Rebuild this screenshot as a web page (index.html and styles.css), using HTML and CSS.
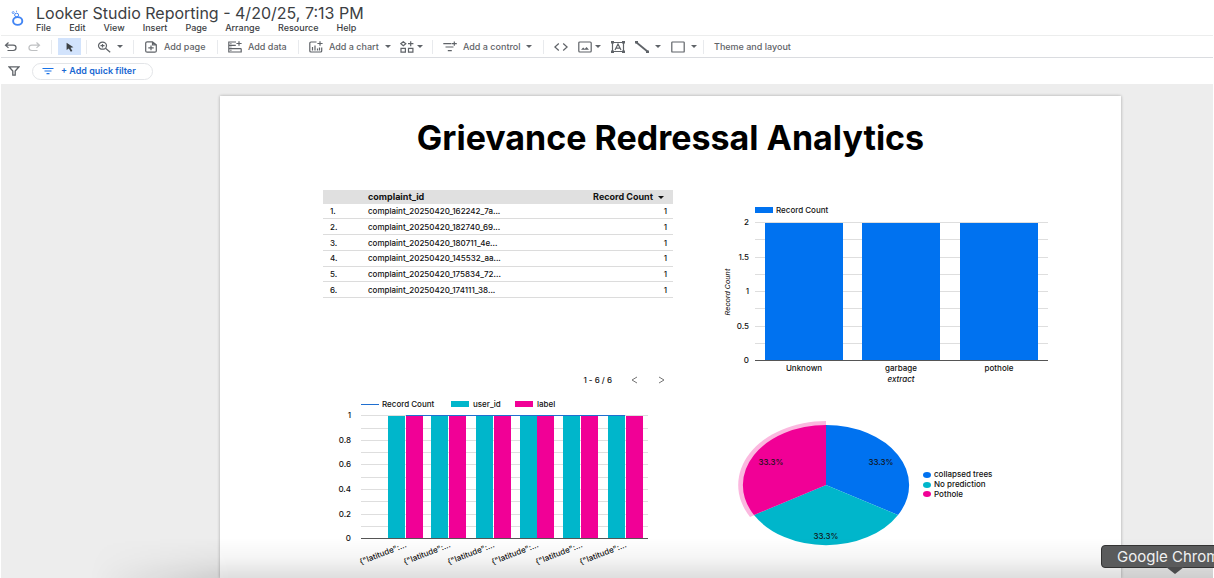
FILE: index.html
```html
<!DOCTYPE html>
<html lang="en">
<head>
<meta charset="utf-8">
<meta name="viewport" content="width=device-width, initial-scale=1">
<title>Looker Studio Reporting</title>
<link rel="stylesheet" href="styles.css">
</head>
<body>
<header class="header">
  <svg class="logo" viewBox="0 0 14 17" fill="none" stroke="#4285f4" aria-hidden="true">
    <ellipse cx="7.7" cy="11" rx="4.6" ry="3.9" stroke-width="1.9"/>
    <ellipse cx="6.6" cy="5" rx="2" ry="1.8" stroke-width="1"/>
    <circle cx="3.2" cy="2.6" r="1" stroke-width=".8"/>
    <path d="M6 1.6 7 .9M7.6 6.8l.6.8" stroke-width="1"/>
  </svg>
  <div class="heading">
    <h1 class="doc-title">Looker Studio Reporting - 4/20/25, 7:13 PM</h1>
    <nav class="menu">
      <button>File</button><button>Edit</button><button>View</button><button>Insert</button><button>Page</button><button>Arrange</button><button>Resource</button><button>Help</button>
    </nav>
  </div>
</header>

<div class="toolbar" role="toolbar" aria-label="Editing tools">
  <div class="group history">
    <button aria-label="Undo"><svg class="icon" viewBox="0 0 14 12"><path d="M4.5 1.5 1.5 4.2l3 2.7M1.8 4.2h7.4c3.8 0 3.8 5.3 0 5.3H3.5"/></svg></button>
    <button aria-label="Redo" class="disabled"><svg class="icon" viewBox="0 0 14 12"><path d="m9.5 1.5 3 2.7-3 2.7M12.2 4.2H4.8C1 4.2 1 9.5 4.8 9.5h5.7"/></svg></button>
  </div>
  <div class="group select">
    <button class="active" aria-label="Select"><svg class="icon" viewBox="0 0 14 12"><path class="solid" d="M3.6 1.8v7.2l2.2-1.5 2 3.2 1.6-.8-1.9-3.1 2.9-.5z"/></svg></button>
  </div>
  <div class="group zoom">
    <button aria-label="Zoom"><svg class="icon" viewBox="0 0 14 12"><ellipse cx="5.5" cy="4.7" rx="4" ry="3.5"/><path d="M5.5 2.9v3.6M3.5 4.7h4M8.5 7.3l4.7 4"/></svg><span class="caret"></span></button>
  </div>
  <div class="group">
    <button><svg class="icon" viewBox="0 0 14 12"><path d="M8.5.9H3.2c-1 0-1.5.4-1.5 1.2v7.9c0 .8.5 1.2 1.5 1.2h7.6c1 0 1.500-.4 1.500-1.200V3.800zM8.500.9v2.900h3.800M7 4.600v4.600M4.300 6.900h5.400"/></svg>Add page</button>
  </div>
  <div class="group">
    <button><svg class="icon" viewBox="0 0 14 12"><path d="M8 1H.8v10h12.400V7.500M.8 4.300h7M.8 7.700h12.400M11 .2v4.600M8.400 2.500h5.200M2.400 2.600h1M2.400 6h1M2.400 9.300h1"/></svg>Add data</button>
  </div>
  <div class="group chart">
    <button><svg class="icon" viewBox="0 0 14 12"><path d="M7.500 1H2Q.8 1 .8 2v8q0 1 1.200 1h9.500q1.200 0 1.200-1V6.500M11 .2v4.600M8.400 2.500h5.200M3.500 6v3.500M6 4.500v5M8.500 7.500v2M10.500 6.500v3"/></svg>Add a chart<span class="caret"></span></button>
    <button aria-label="Community visualizations" class="tight"><svg class="icon" viewBox="0 0 14 12"><path d="M3.300.7 5.800 2.700 3.300 4.700.8 2.700zM10.700.2v5M8 2.700h5.400M1 7.300h4.400v3.900H1zM8.500 7.300h4.400v3.900H8.500z"/></svg><span class="caret"></span></button>
  </div>
  <div class="group">
    <button><svg class="icon" viewBox="0 0 14 12"><path d="M.3 2.600h8M2.500 6h8M4.800 9.600h4M11.300.4v4.400M8.800 2.600h5"/></svg>Add a control<span class="caret"></span></button>
  </div>
  <div class="group insert">
    <button aria-label="Embed URL"><svg class="icon" viewBox="0 0 14 12"><path d="M4.800 2.500.9 6l3.900 3.500M9.200 2.500 13.100 6 9.200 9.500"/></svg></button>
    <button aria-label="Image" class="tight"><svg class="icon" viewBox="0 0 14 12"><rect x=".8" y="1" width="12.400" height="10" rx="1"/><path class="solid" d="M3 8.800 5.200 6.400 6.800 7.900 8.500 5.900 11 8.800z"/></svg><span class="caret"></span></button>
    <button aria-label="Text"><svg class="icon" viewBox="0 0 14 12"><path d="M1.500 1.500h11v9h-11zM4 9l3-6 3 6M5 7.200h4"/><path class="solid" d="M0 0h3v2.500H0zM11 0h3v2.500h-3zM0 9.500h3V12H0zM11 9.500h3V12h-3z"/></svg></button>
    <button aria-label="Line"><svg class="icon" viewBox="0 0 14 12"><path d="m1.500 1.500 11 9" stroke-width="1.800"/><path class="solid" d="M0 0h3v2.500H0zM11 9.500h3V12h-3z"/></svg><span class="caret"></span></button>
    <button aria-label="Shape"><svg class="icon" viewBox="0 0 14 12"><rect x=".8" y="1" width="12.400" height="10" rx=".6"/></svg><span class="caret"></span></button>
  </div>
  <div class="group">
    <button>Theme and layout</button>
  </div>
</div>

<div class="filter-bar">
  <svg class="funnel" viewBox="0 0 12 10" aria-hidden="true"><path d="M1 .8h10L7.200 5v4.200H4.800V5z"/></svg>
  <button class="quick-filter"><svg class="filter-icon" viewBox="0 0 12 8" aria-hidden="true"><path d="M.5 1.500h11M2.500 4h7M4.500 6.600h3"/></svg>+ Add quick filter</button>
</div>

<main class="workspace">
  <section class="report">
    <h2 class="report-title">Grievance Redressal Analytics</h2>
    <div class="widgets">
      <div class="column">
        <table class="records">
          <thead><tr><th class="num"></th><th class="id">complaint_id</th><th class="count">Record Count<span class="caret"></span></th></tr></thead>
          <tbody>
            <tr><td>1.</td><td>complaint_20250420_162242_7a...</td><td class="count">1</td></tr>
            <tr><td>2.</td><td>complaint_20250420_182740_69...</td><td class="count">1</td></tr>
            <tr><td>3.</td><td>complaint_20250420_180711_4e...</td><td class="count">1</td></tr>
            <tr><td>4.</td><td>complaint_20250420_145532_aa...</td><td class="count">1</td></tr>
            <tr><td>5.</td><td>complaint_20250420_175834_72...</td><td class="count">1</td></tr>
            <tr><td>6.</td><td>complaint_20250420_174111_38...</td><td class="count">1</td></tr>
          </tbody>
        </table>
        <div class="pager">
          <span>1 - 6 / 6</span>
          <button aria-label="Previous page"><svg viewBox="0 0 7 8"><path d="M6 1 1 4l5 3"/></svg></button>
          <button aria-label="Next page"><svg viewBox="0 0 7 8"><path d="m1 1 5 3-5 3"/></svg></button>
        </div>
        <svg class="chart-svg" viewBox="0 0 350 170" role="img" aria-label="Record count, user_id and label by location">
          <path class="series-line" d="M38 8.5h18"/><text x="59" y="11">Record Count</text>
          <rect class="teal" x="128" y="5" width="18" height="6"/><text x="150" y="11">user_id</text>
          <rect class="pink" x="192" y="5" width="18" height="6"/><text x="214" y="11">label</text>
          <path class="grid" d="M38 19.500h287M38 32.500h287M38 44.500h287M38 56.500h287M38 68.500h287M38 81.500h287M38 93.500h287M38 105.500h287M38 118.500h287M38 130.500h287"/>
          <g class="teal"><path d="M65 20h17v122H65zM108 20h17v122h-17zM153 20h17v122h-17zM197 20h17v122h-17zM240 20h17v122h-17zM285 20h17v122h-17z"/></g>
          <g class="pink"><path d="M83 20h17v122H83zM126 20h17v122h-17zM171 20h17v122h-17zM214 20h17v122h-17zM258 20h17v122h-17zM303 20h17v122h-17z"/></g>
          <path class="series-line" d="M83 19.500h219"/>
          <path class="axis" d="M38 142.500h287"/>
          <g class="end"><text x="28" y="22">1</text><text x="28" y="47">0.8</text><text x="28" y="71">0.6</text><text x="28" y="96">0.4</text><text x="28" y="121">0.2</text><text x="28" y="145">0</text></g>
          <g class="end slanted">
            <text transform="translate(84 151) rotate(-21)">{"latitude":...</text>
            <text transform="translate(128 151) rotate(-21)">{"latitude":...</text>
            <text transform="translate(172 151) rotate(-21)">{"latitude":...</text>
            <text transform="translate(216 151) rotate(-21)">{"latitude":...</text>
            <text transform="translate(260 151) rotate(-21)">{"latitude":...</text>
            <text transform="translate(304 151) rotate(-21)">{"latitude":...</text>
          </g>
        </svg>
      </div>
      <div class="column charts">
        <svg class="chart-svg" viewBox="0 0 328 183" role="img" aria-label="Record count by extract">
          <rect class="blue" x="33" y="4" width="18" height="6"/><text x="54" y="10">Record Count</text>
          <path class="grid" d="M33 19.500h293M33 36.500h293M33 54.500h293M33 71.500h293M33 88.500h293M33 105.500h293M33 123.500h293M33 140.500h293"/>
          <path class="blue" d="M43 20h78v137H43zM140 20h78v137h-78zM238 20h78v137h-78z"/>
          <path class="axis" d="M33 157.500h293"/>
          <g class="end"><text x="27" y="22">2</text><text x="27" y="57">1.5</text><text x="27" y="91">1</text><text x="27" y="126">0.5</text><text x="27" y="160">0</text></g>
          <g class="middle"><text x="82" y="168">Unknown</text><text x="179" y="168">garbage</text><text x="277" y="168">pothole</text>
          <text class="axis-title" x="179" y="179">extract</text>
          <text class="axis-title vertical" transform="translate(8 89) rotate(-90)">Record Count</text></g>
        </svg>
        <svg class="chart-svg" viewBox="0 0 328 135" role="img" aria-label="Share of predictions">
          <path class="halo" d="M104 70V6A88 64 0 0 0 28 102z"/>
          <path class="blue" d="M104 70V10A83 60 0 0 1 176 100z"/>
          <path class="teal" d="M104 70 176 100A83 60 0 0 1 32 100z"/>
          <path class="pink" d="M104 70 32 100A83 60 0 0 1 104 10z"/>
          <g class="middle"><text x="159" y="50">33.3%</text><text x="104" y="124">33.3%</text><text x="49" y="50">33.3%</text></g>
          <ellipse class="blue" cx="205" cy="60" rx="4" ry="3"/><text x="212" y="62">collapsed trees</text>
          <ellipse class="teal" cx="205" cy="70" rx="4" ry="3"/><text x="212" y="72">No prediction</text>
          <ellipse class="pink" cx="205" cy="79" rx="4" ry="3"/><text x="212" y="82">Pothole</text>
        </svg>
      </div>
    </div>
  </section>
</main>
<div class="dock-shade"></div>
<div class="dock-tip" role="tooltip">Google Chrome</div>
</body>
</html>
```

FILE: styles.css
```css
* { box-sizing: border-box; }

body {
  position: relative;
  display: flex;
  flex-direction: column;
  height: 100vh;
  margin: 0;
  padding: 0 1px;
  overflow: hidden;
  background: #fff;
  color: #3c4043;
  font: 9px/12px Inter, "Noto Sans", sans-serif;
}

button {
  display: inline-flex;
  align-items: center;
  padding: 0;
  border: 0;
  background: none;
  color: inherit;
  font: inherit;
  white-space: nowrap;
}

.header { display: flex; gap: 12px; padding: 5px 0 1px 9px; }
.logo { width: 14px; height: 17px; margin-top: 5px; }
.doc-title { margin: 0; font-size: 16px; font-weight: 400; line-height: 17px; color: #3c4043; }
.menu { display: flex; gap: 18px; font-weight: 500; }

.toolbar {
  display: grid;
  grid-template-columns: 51px 35px 47px 84px 81px 134px 111px 160px 1fr;
  align-items: center;
  height: 23px;
  border-top: 1px solid #eceded;
  border-bottom: 1px solid #dadce0;
  color: #5f6368;
  font-weight: 500;
}
.group {
  display: flex;
  align-items: center;
  gap: 9px;
  height: 14px;
  padding-left: 10px;
  border-right: 1px solid #e8eaed;
}
.group:last-child { border: 0; }
.group button { gap: 6px; }
.group .tight { gap: 3px; }
.history { padding-left: 3px; }
.select { padding-left: 6px; }
.insert { gap: 10px; }
.icon { width: 14px; height: 12px; fill: none; stroke: #5f6368; stroke-width: 1.2; }
.icon .solid { fill: #5f6368; stroke: none; }
.disabled { opacity: .4; }
.active { justify-content: center; width: 23px; height: 17px; background: #d2e3fc; }
.active .icon .solid { fill: #3c4043; }
.caret {
  display: inline-block;
  border: 3px solid transparent;
  border-top-color: currentColor;
  border-bottom: 0;
}

.filter-bar { display: flex; align-items: center; gap: 12px; height: 26px; padding-left: 7px; }
.funnel { width: 12px; height: 10px; fill: none; stroke: #5f6368; stroke-width: 1.3; }
.quick-filter {
  gap: 7px;
  height: 17px;
  padding: 0 16px 0 9px;
  border: 1px solid #e3e5e8;
  border-radius: 9px;
  color: #1967d2;
  font-weight: 600;
}
.filter-icon { width: 12px; height: 8px; stroke: #1a73e8; stroke-width: 1.2; }

.workspace { flex: 1; min-height: 0; padding: 12px 92px 0 219px; background: #ededed; }
.report {
  min-height: 100%;
  padding-top: 22px;
  background: #fff;
  box-shadow: 0 0 3px rgba(0, 0, 0, .3);
  color: #111;
}
.report-title {
  margin: 0 0 32px;
  color: #000;
  font-size: 34px;
  font-weight: 700;
  line-height: 40px;
  text-align: center;
  white-space: nowrap;
}
.widgets { display: grid; grid-template-columns: 350fr 328fr; gap: 49px; padding: 0 71px 0 103px; }
.column { display: flex; flex-direction: column; }
.charts { gap: 29px; padding-top: 13px; }

.records { width: 100%; height: 108px; border-collapse: collapse; table-layout: fixed; font-size: 8px; line-height: 10px; }
.records th { height: 14px; padding: 0; background: #e0e0e0; font-size: 9px; font-weight: 700; text-align: left; }
.records td { padding: 0; border-bottom: 1px solid #dcdcdc; font-weight: 500; }
.records td:first-child { padding-left: 7px; }
.records .num { width: 45px; }
.records .count { width: 110px; padding-right: 6px; text-align: right; }
.records .caret { margin-left: 5px; vertical-align: middle; }
.records th.count { padding-right: 9px; }

.pager { display: flex; justify-content: flex-end; align-items: center; gap: 18px; margin: 76px 7px 10px; font-size: 8px; font-weight: 500; }
.pager svg { width: 7px; height: 8px; margin: 0 1px; fill: none; stroke: #757575; }

.chart-svg { display: block; width: 100%; height: auto; font-size: 8px; font-weight: 500; fill: #111; }
.blue { fill: #0072f0; }
.teal { fill: #00b6cb; }
.pink { fill: #f10096; }
.halo { fill: #fbb8df; }
.grid { stroke: #dedede; }
.axis { stroke: #555; }
.series-line { stroke: #1f6fd0; }
.end { text-anchor: end; }
.middle { text-anchor: middle; }
.axis-title { font-style: italic; }
.vertical { font-family: Roboto, sans-serif; font-weight: 400; }

.dock-shade {
  position: absolute;
  inset: auto 1px 0 90px;
  height: 40px;
  background: linear-gradient(transparent, rgba(0, 0, 0, .04) 50%, rgba(0, 0, 0, .13));
  mask-image: linear-gradient(to right, transparent, #000 140px);
  pointer-events: none;
}
.dock-tip {
  position: absolute;
  right: -44px;
  bottom: 10px;
  width: 157px;
  padding: 0 15px;
  border: 1px solid #333;
  border-radius: 4px;
  background: #5a5b5c;
  color: #f1f1f1;
  font-size: 15px;
  line-height: 21px;
}
.dock-tip::after {
  content: "";
  position: absolute;
  top: 100%;
  left: 64px;
  border: 9px solid transparent;
  border-top: 7px solid #4a4b4c;
  border-bottom: 0;
}
```
